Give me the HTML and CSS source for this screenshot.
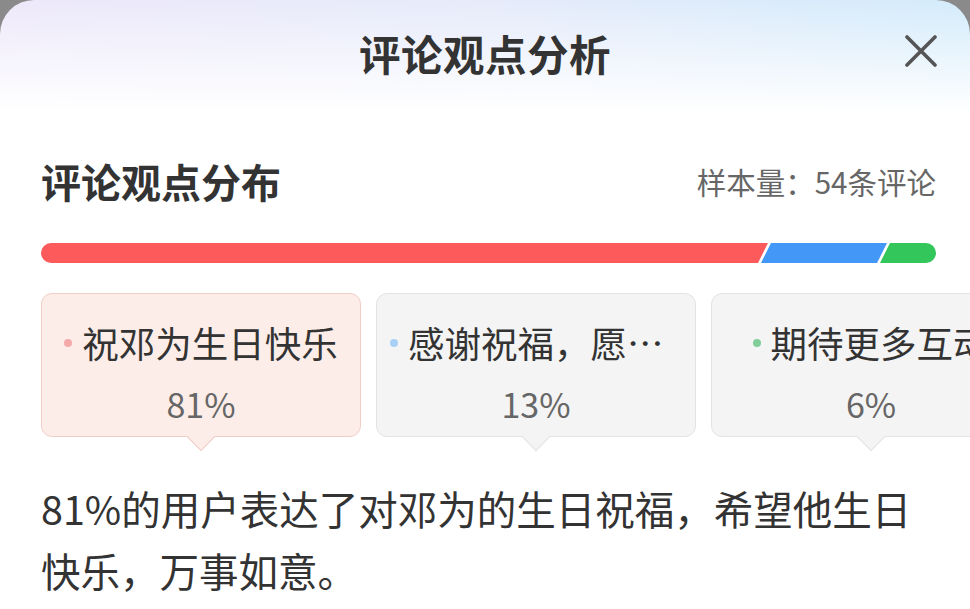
FILE: index.html
```html
<!DOCTYPE html>
<html lang="zh-CN">
<head>
<meta charset="utf-8">
<title>评论观点分析</title>
<link rel="stylesheet" href="styles.css">
</head>
<body>
<div class="sheet">
  <header class="top">
    <div></div>
    <h1 class="title">评论观点分析</h1>
    <button class="close" aria-label="关闭">
      <svg width="32" height="32" viewBox="0 0 32 32"><path d="M2 2L30 30M30 2L2 30" stroke="#555" stroke-width="3.6" stroke-linecap="round" fill="none"/></svg>
    </button>
  </header>
  <main class="content">
    <div class="sec-head">
      <h2 class="sec-title">评论观点分布</h2>
      <span class="sample">样本量：54条评论</span>
    </div>
    <svg class="bar" width="895" height="20" viewBox="0 0 895 20">
      <defs><clipPath id="r"><rect x="0" y="0" width="895" height="20" rx="10" ry="10"/></clipPath></defs>
      <g clip-path="url(#r)">
        <polygon points="0,0 727,0 717,20 0,20" fill="#fc5a5b"/>
        <polygon points="730,0 846,0 836,20 720,20" fill="#4398f7"/>
        <polygon points="849,0 895,0 895,20 839,20" fill="#33c65a"/>
      </g>
    </svg>
    <div class="cards">
      <div class="card active">
        <div class="label"><i class="dot red"></i><span class="ltext">祝邓为生日快乐</span></div>
        <div class="pct">81%</div>
      </div>
      <div class="card">
        <div class="label"><i class="dot blue"></i><span class="ltext">感谢祝福，愿邓为事事顺心</span></div>
        <div class="pct">13%</div>
      </div>
      <div class="card">
        <div class="label"><i class="dot green"></i><span class="ltext">期待更多互动</span></div>
        <div class="pct">6%</div>
      </div>
    </div>
    <p class="desc">81%的用户表达了对邓为的生日祝福，希望他生日快乐，万事如意。</p>
  </main>
</div>
</body>
</html>
```

FILE: styles.css
```css
html, body {
  margin: 0;
  padding: 0;
}
body {
  background: #8a8a8a;
  font-family: "Noto Sans CJK SC", "Noto Sans", sans-serif;
  color: #333;
  overflow: hidden;
}
.sheet {
  width: 970px;
  min-height: 609px;
  border-radius: 34px 34px 0 0;
  background:
    linear-gradient(rgba(255,255,255,0) 0, #fff 112px) 0 0 / 100% 120px no-repeat,
    linear-gradient(90deg, #ede8fa 0%, #e6ebfa 50%, #d3ebfb 100%) 0 0 / 100% 120px no-repeat,
    #fff;
  overflow: hidden;
}
.top {
  height: 114px;
  display: grid;
  grid-template-columns: 1fr auto 1fr;
  align-items: center;
}
.title {
  margin: 0 0 8px;
  font-size: 41.5px;
  font-weight: 700;
  line-height: 60px;
  color: #333;
  letter-spacing: 0.5px;
}
.close {
  justify-self: end;
  margin-right: 33px;
  margin-bottom: 12px;
  border: 0;
  padding: 0;
  background: none;
  width: 32px;
  height: 32px;
  display: flex;
}
.content {
  padding: 0 34px 0 41px;
}
.sec-head {
  margin-top: 37px;
  height: 60px;
  display: flex;
  justify-content: space-between;
  align-items: center;
}
.sec-title {
  margin: 0;
  font-size: 40px;
  font-weight: 700;
  color: #333;
  line-height: 60px;
}
.sample {
  font-size: 29.5px;
  color: #666;
  line-height: 60px;
}
.bar {
  display: block;
  margin-top: 32px;
}
.cards {
  margin-top: 30px;
  display: flex;
  gap: 15px;
  width: 970px;
  overflow: hidden;
  padding-bottom: 16px;
}
.card {
  flex: 0 0 320px;
  width: 320px;
  min-width: 0;
  height: 144px;
  box-sizing: border-box;
  background: #f4f4f4;
  border: 1.5px solid #e3e3e3;
  border-radius: 11px;
  position: relative;
  display: flex;
  flex-direction: column;
  align-items: center;
  padding: 23px 13px 0;
}
.card::after {
  content: "";
  position: absolute;
  left: 50%;
  bottom: -11px;
  width: 19px;
  height: 19px;
  margin-left: -10px;
  background: inherit;
  border-right: 1.5px solid #e3e3e3;
  border-bottom: 1.5px solid #e3e3e3;
  transform: rotate(45deg);
}
.card.active {
  background: #fdede8;
  border-color: #f1cdc8;
}
.card.active::after {
  border-color: #f1cdc8;
}
.label {
  display: flex;
  align-items: center;
  max-width: 100%;
  min-width: 0;
  height: 52px;
}
.dot {
  flex: 0 0 8px;
  width: 8px;
  height: 8px;
  border-radius: 50%;
  margin-right: 10px;
}
.dot.red { background: #f5aaaa; }
.dot.blue { background: #a9d1f8; }
.dot.green { background: #7fcd99; }
.ltext {
  min-width: 0;
  font-size: 36.5px;
  line-height: 52px;
  color: #333;
  white-space: nowrap;
  overflow: hidden;
  text-overflow: ellipsis;
}
.pct {
  margin-top: 9px;
  font-size: 34px;
  line-height: 52px;
  color: #666;
}
.desc {
  margin: 24px 0 0;
  font-size: 39.5px;
  line-height: 62px;
  color: #333;
}
```
